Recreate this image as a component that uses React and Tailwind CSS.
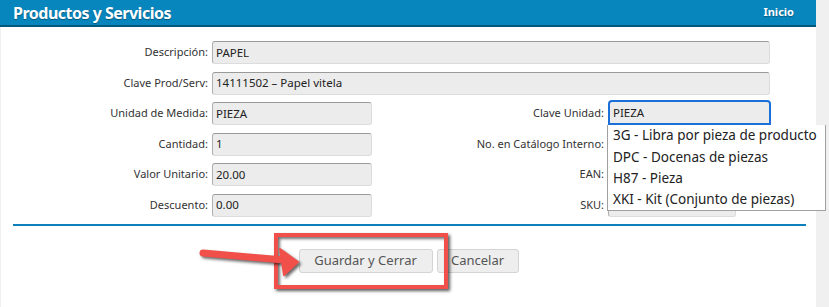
import React from "react";

const labelCls =
  "flex items-center justify-end pr-[4px] text-[11px] text-[#333] whitespace-nowrap";
const inputCls =
  "h-[23px] flex items-center pl-[3px] bg-[#ececec] border border-t-[#9a9a9a] border-l-[#b0b0b0] border-r-[#dcdcdc] border-b-[#dcdcdc] rounded-[3px] text-[11.5px] text-[#222] whitespace-nowrap overflow-hidden";

function Field({ value, className = "" }) {
  return <div className={`${inputCls} ${className}`}>{value}</div>;
}

export default function App() {
  return (
    <div
      className="relative w-[829px] h-[307px] bg-[#f0f0f0] flex overflow-hidden"
      style={{ fontFamily: '"Noto Sans", "Open Sans", sans-serif' }}
    >
      <div className="w-[815px] h-full bg-white ml-[1px] flex flex-col">
        {/* header */}
        <div className="h-[27px] bg-[#0786bd] border-b-2 border-[#06577c] flex items-center justify-between pl-[13px] pr-[22px] -ml-[1px]">
          <span className="text-white font-bold text-[16px] tracking-[-0.5px] [text-shadow:0_1px_1px_rgba(0,0,0,0.35)]">
            Productos y Servicios
          </span>
          <span className="text-white font-bold text-[11px] [text-shadow:0_1px_1px_rgba(0,0,0,0.35)]">
            Inicio
          </span>
        </div>

        {/* form */}
        <div className="pt-[14px] grid grid-cols-[211px_160px_236px_163px] gap-y-[7.5px] auto-rows-[23px]">
          <div className={labelCls}>Descripción:</div>
          <Field value="PAPEL" className="col-span-3 w-[558px]" />

          <div className={labelCls}>Clave Prod/Serv:</div>
          <Field value="14111502 – Papel vitela" className="col-span-3 w-[558px]" />

          <div className={labelCls}>Unidad de Medida:</div>
          <Field value="PIEZA" />
          <div className={`${labelCls} pr-[3px]`}>Clave Unidad:</div>
          <div className="h-[25px] -mt-[2px] flex items-center pl-[3px] bg-[#ececec] border-2 border-[#1b6fd9] rounded-t-[4px] text-[11.5px] text-[#222]">
            PIEZA
          </div>

          <div className={labelCls}>Cantidad:</div>
          <Field value="1" />
          <div className={`${labelCls} pr-[3px]`}>No. en Catálogo Interno:</div>
          <Field value="" className="w-[128px]" />

          <div className={labelCls}>Valor Unitario:</div>
          <Field value="20.00" />
          <div className={`${labelCls} pr-[3px]`}>EAN:</div>
          <Field value="" className="w-[128px]" />

          <div className={labelCls}>Descuento:</div>
          <Field value="0.00" />
          <div className={`${labelCls} pr-[3px]`}>SKU:</div>
          <Field value="" className="w-[128px]" />
        </div>

        {/* separator */}
        <div className="mt-[7px] ml-[12px] mr-[10px] h-[2px] bg-[#0b80bb]" />

        {/* buttons */}
        <div className="mt-[23px] flex justify-center gap-[4px]">
          <button className="h-[24px] w-[134px] bg-[#eeeeee] border border-[#d4d4d4] rounded-[3px] text-[13px] text-[#555]">
            Guardar y Cerrar
          </button>
          <button className="h-[24px] w-[82px] bg-[#eeeeee] border border-[#d4d4d4] rounded-[3px] text-[13px] text-[#555]">
            Cancelar
          </button>
        </div>
      </div>

      {/* dropdown list */}
      <div className="absolute left-[607px] top-[125px] w-[219px] bg-white border border-[#a0a0a0] border-t-0 flex flex-col text-[13.5px] text-[#222]">
        <div className="h-[21px] flex items-center pl-[5px] whitespace-nowrap">3G - Libra por pieza de producto</div>
        <div className="h-[21.5px] flex items-center pl-[5px] whitespace-nowrap">DPC - Docenas de piezas</div>
        <div className="h-[21px] flex items-center pl-[5px] whitespace-nowrap">H87 - Pieza</div>
        <div className="h-[21px] flex items-center pl-[5px] whitespace-nowrap">XKI - Kit (Conjunto de piezas)</div>
      </div>

      {/* red annotation box */}
      <div className="absolute left-[274px] top-[233px] w-[174px] h-[56px] border-[4px] border-[#f1504a] shadow-[2px_2px_3px_rgba(0,0,0,0.65),inset_2px_2px_3px_rgba(0,0,0,0.55)]" />

      {/* arrow */}
      <svg
        className="absolute left-0 top-0 drop-shadow-[2px_2px_1.5px_rgba(0,0,0,0.6)]"
        width="829"
        height="307"
        viewBox="0 0 829 307"
      >
        <line x1="203" y1="253" x2="284" y2="260" stroke="#f1504a" strokeWidth="7" strokeLinecap="round" />
        <polygon points="280,249 298,262 284,275" fill="#f1504a" stroke="#f1504a" strokeWidth="2" strokeLinejoin="round" />
      </svg>
    </div>
  );
}
